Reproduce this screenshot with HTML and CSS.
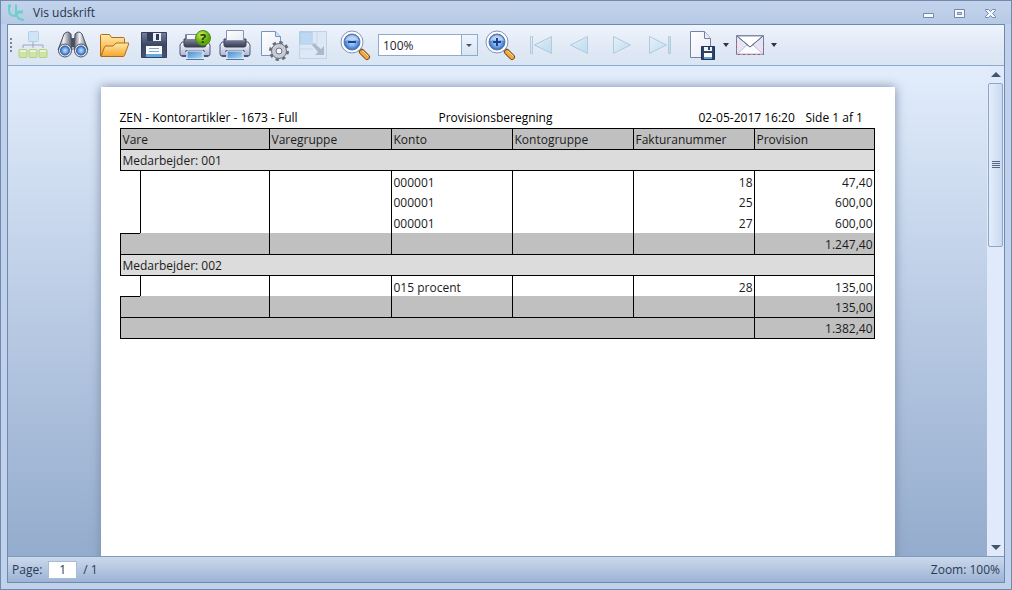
FILE: index.html
```html
<!DOCTYPE html>
<html lang="da">
<head>
<meta charset="utf-8">
<title>Vis udskrift</title>
<link rel="stylesheet" href="styles.css">
</head>
<body>
<svg class="defs" aria-hidden="true">
  <defs>
    <linearGradient id="steel" x1="0" y1="0" x2="1" y2="0"><stop offset="0" stop-color="#5b6070"/><stop offset=".4" stop-color="#f2f3f7"/><stop offset="1" stop-color="#4a5062"/></linearGradient>
    <radialGradient id="lens"><stop offset="0" stop-color="#c4e0ff"/><stop offset=".6" stop-color="#6ba5ec"/><stop offset="1" stop-color="#3566b4"/></radialGradient>
    <linearGradient id="gold" x1="0" y1="0" x2="0" y2="1"><stop offset="0" stop-color="#ffe9a6"/><stop offset="1" stop-color="#f5a52c"/></linearGradient>
    <linearGradient id="navy" x1="0" y1="0" x2="0" y2="1"><stop offset="0" stop-color="#75819a"/><stop offset=".5" stop-color="#3a4664"/><stop offset="1" stop-color="#465372"/></linearGradient>
    <linearGradient id="blue" x1="0" y1="0" x2="1" y2="1"><stop offset="0" stop-color="#4788c8"/><stop offset="1" stop-color="#b9ddf8"/></linearGradient>
    <linearGradient id="body" x1="0" y1="0" x2="0" y2="1"><stop offset="0" stop-color="#fdfdff"/><stop offset="1" stop-color="#aab3d2"/></linearGradient>
    <linearGradient id="slot" x1="0" y1="0" x2="0" y2="1"><stop offset="0" stop-color="#8289a0"/><stop offset="1" stop-color="#343a50"/></linearGradient>
    <linearGradient id="paper" x1="0" y1="0" x2="1" y2="1"><stop offset="0" stop-color="#ffffff"/><stop offset="1" stop-color="#e6eaf5"/></linearGradient>
    <linearGradient id="pale" x1="0" y1="0" x2="1" y2="1"><stop offset="0" stop-color="#e6f1fa"/><stop offset="1" stop-color="#bddaed"/></linearGradient>
    <radialGradient id="lime" cx=".4" cy=".3"><stop offset="0" stop-color="#c9f45c"/><stop offset="1" stop-color="#5fa80c"/></radialGradient>
    <symbol id="printer" viewBox="0 0 32 32">
      <path d="M3 13h26l2 3v9q0 2-2 2H3q-2 0-2-2v-9z" fill="url(#body)" stroke="#4d587e"/>
      <path d="M2 26h5v2H3zM25 26h5l-1 2h-4z" fill="#4d587e"/>
      <path d="M5 10h22v6q0 2-2 2H7q-2 0-2-2z" fill="url(#slot)" stroke="#3b4158"/>
      <path d="M7 21h18l1 2H6z" fill="#4c5878"/>
      <path d="M8 22h16v8H8z" fill="url(#blue)" stroke="#eef4fc"/>
      <path d="M7 30.500h18" stroke="#5278ab"/>
    </symbol>
    <symbol id="glass" viewBox="0 0 32 32">
      <path d="M20 20l3 3" stroke="#5b6480" stroke-width="4"/>
      <path d="M23 23l5 5" stroke="#7c4b1c" stroke-width="6" stroke-linecap="round"/>
      <path d="M23 23l5 5" stroke="#f3a83d" stroke-width="4" stroke-linecap="round"/>
      <path d="M24 22l5 5" stroke="#ffe2a0" stroke-linecap="round"/>
      <circle cx="13" cy="13" r="11" fill="#fff" stroke="#8293b4"/>
      <circle cx="13" cy="13" r="8" fill="url(#lens)" stroke="#5478b8"/>
      <path d="M6 12q1-6 7-6t7 6q-7-3-14 0z" fill="#fff" opacity=".5"/>
    </symbol>
  </defs>
</svg>
<div class="window">
  <header class="titlebar">
    <svg class="logo" width="18" height="18" viewBox="0 0 18 18" fill="none" stroke="#6fcfc8" stroke-width="2"><path d="M2 2v4q0 6 6 6h1M9 2v5q0 9 8 9"/><path d="M16 8h-3q-4 0-4 4M1 2h3M8 2h2" stroke-width="3"/></svg>
    <h1 class="title">Vis udskrift</h1>
    <div class="controls">
      <button class="control" aria-label="Minimer"><svg width="12" height="12" viewBox="0 0 12 12"><path d="M.5 6.500h10v4H.5z" fill="#f6faff" stroke="#7388ac"/></svg></button>
      <button class="control" aria-label="Maksimer"><svg width="12" height="12" viewBox="0 0 12 12"><path d="M.5 2.500h10v8H.5z" fill="#f6faff" stroke="#7388ac"/><path d="M3.500 5.500h4v2h-4z" fill="#c9d9ef" stroke="#7388ac"/></svg></button>
      <button class="control" aria-label="Luk"><svg width="12" height="12" viewBox="0 0 12 12"><path d="M.5 2.500h3l2 2 2-2h3v1l-3 3 3 3v1h-3l-2-2-2 2h-3v-1l3-3-3-3z" fill="#f6faff" stroke="#7388ac"/></svg></button>
    </div>
  </header>

  <main class="client">
    <div class="toolbar" role="toolbar" aria-label="Udskrift">
      <svg class="grip" width="5" height="16" viewBox="0 0 5 16" fill="#7b8496"><path d="M2 1h2v2H2zM2 5h2v2H2zM2 9h2v2H2zM2 13h2v2H2z"/></svg>
      <button class="tool" aria-label="Dokumentoversigt"><svg viewBox="0 0 32 32"><path d="M16 12v7M6 19v-3h20v3" fill="none" stroke="#a3a4c4"/><rect x="11.500" y="2.500" width="10" height="10" rx="1" fill="#cfe4f5" stroke="#b3cfe6"/><g fill="#cfe3a6" stroke="#b5d080"><rect x="2" y="20.500" width="8" height="8" rx="1"/><rect x="12" y="20.500" width="8" height="8" rx="1"/><rect x="22" y="20.500" width="8" height="8" rx="1"/></g><path d="M3 22h6M13 22h6M23 22h6" stroke="#eaf4d4" stroke-width="2"/></svg></button>
      <button class="tool" aria-label="Søg"><svg viewBox="0 0 32 32"><path d="M13 9h6v9h-6z" fill="#4a4f5e"/><path d="M7 5q4-4 7 0l1 16H1z" fill="url(#steel)" stroke="#4c5264"/><path d="M18 5q4-4 7 0l6 16H17z" fill="url(#steel)" stroke="#4c5264"/><g stroke="#4c5264" fill="#e3e7f0"><circle cx="8" cy="21.500" r="6.500"/><circle cx="24" cy="21.500" r="6.500"/></g><circle cx="8" cy="21.500" r="4.500" fill="url(#lens)" stroke="#355da0"/><circle cx="24" cy="21.500" r="4.500" fill="url(#lens)" stroke="#355da0"/></svg></button>
      <button class="tool" aria-label="Åbn"><svg viewBox="0 0 32 32"><path d="M3.500 27V6.500q0-1 1-1h8l2 3h12q1 0 1 1V15l-3 12z" fill="url(#gold)" stroke="#b06a1c"/><path d="M4 27.500h22q1 0 1.500-1L32 14H19l-3 3H9q-1 0-1.500 1z" fill="url(#gold)" stroke="#b06a1c"/></svg></button>
      <button class="tool" aria-label="Gem"><svg viewBox="0 0 32 32"><path d="M4.500 3.500h25v25h-25z" fill="url(#navy)" stroke="#353e5a"/><path d="M10 4h14v8H10z" fill="#e9edf5"/><path d="M10 4h6v8h-6z" fill="#303c58"/><path d="M19 5h3v6h-3z" fill="#2d3955"/><path d="M9 17h16v11H9z" fill="#fafcff"/><path d="M9 25h16v3H9z" fill="#62a9e6"/><path d="M12 19.500h10M12 22.500h10" stroke="#8ea6c4"/></svg></button>
      <button class="tool gap" aria-label="Udskriv"><svg viewBox="0 0 32 32"><path d="M6.500 5.500h15v9h-15z" fill="url(#paper)" stroke="#7884a8"/><use href="#printer" width="32" height="32"/><path d="M7.500 5.500h14v5h-14z" fill="url(#paper)" stroke="#7884a8"/><circle cx="24" cy="9" r="7.500" fill="url(#lime)" stroke="#4c8a0c"/><text x="24" y="14" class="mark">?</text></svg></button>
      <button class="tool" aria-label="Hurtig udskrivning"><svg viewBox="0 0 32 32"><use href="#printer" width="32" height="32"/><path d="M7.500 1.500h17v10h-17z" fill="url(#paper)" stroke="#8a93b2"/></svg></button>
      <button class="tool" aria-label="Sideopsætning"><svg viewBox="0 0 32 32"><path d="M2.500 2.500h14l5 5v19h-19z" fill="url(#paper)" stroke="#7a94c0"/><path d="M16.500 2.500v5h5" fill="#cfe4f7" stroke="#7a94c0"/><circle cx="20" cy="22" r="8.500" fill="none" stroke="#686d7b" stroke-width="3" stroke-dasharray="3.340 3.340"/><circle cx="20" cy="22" r="7.500" fill="#c9ccd5" stroke="#6d7280"/><circle cx="20" cy="22" r="3" fill="#f4f6fb" stroke="#6d7280"/></svg></button>
      <button class="tool" aria-label="Skaler" disabled><svg viewBox="0 0 32 32"><path d="M.5 2.500h27v27H.5z" fill="#dce8f5" stroke="#c2d1e4"/><path d="M1 3h12v12H1z" fill="#bdd8f2" stroke="#a9c8e8"/><path d="M13 3v13M18 3v12M1 15h17M1 20h13" fill="none" stroke="#c6d8ec"/><path d="M13 16l2-2 7 6 3-3v9h-9l3-3z" fill="#adb8ca"/></svg></button>
      <button class="tool" aria-label="Zoom ud"><svg viewBox="0 0 32 32"><use href="#glass" width="32" height="32"/><path d="M9 13h8" stroke="#203f86" stroke-width="2"/></svg></button>
      <div class="combo">
        <select class="combo-select" aria-label="Zoomniveau"><option>100%</option></select>
        <svg class="combo-arrow" width="16" height="20" viewBox="0 0 16 20"><path d="M.5 0v20" stroke="#93abcf"/><path d="M5 9h6l-3 3z" fill="#4a5468"/></svg>
      </div>
      <button class="tool gap" aria-label="Zoom ind"><svg viewBox="0 0 32 32"><use href="#glass" width="32" height="32"/><path d="M9 13h8M13 9v8" stroke="#203f86" stroke-width="2"/></svg></button>
      <button class="tool gap" aria-label="Første side" disabled><svg viewBox="0 0 32 32" fill="url(#pale)" stroke="#b0cade"><path d="M4.500 7.500h2v17h-2zM8.500 16L25.500 7.500v17z"/></svg></button>
      <button class="tool" aria-label="Forrige side" disabled><svg viewBox="0 0 32 32" fill="url(#pale)" stroke="#b0cade"><path d="M4.500 16L21.500 7.500v17z"/></svg></button>
      <button class="tool" aria-label="Næste side" disabled><svg viewBox="0 0 32 32" fill="url(#pale)" stroke="#b0cade"><path d="M24.500 16L7.500 7.500v17z"/></svg></button>
      <button class="tool" aria-label="Sidste side" disabled><svg viewBox="0 0 32 32" fill="url(#pale)" stroke="#b0cade"><path d="M22.500 7.500h2v17h-2zM20.500 16L3.500 7.500v17z"/></svg></button>
      <button class="tool" aria-label="Eksporter"><svg viewBox="0 0 32 32"><path d="M4.500 2.500h14l6 7v19h-20z" fill="url(#paper)" stroke="#76829f"/><path d="M18.500 2.500v7h6" fill="#e4ebf7" stroke="#76829f"/><path d="M15.500 17.500h13v13h-13z" fill="#2f456c" stroke="#223252"/><path d="M18 18h8v4h-8z" fill="#f0f4fb"/><path d="M22 18h2v3h-2z" fill="#2f456c"/><path d="M18 24h8v4h-8z" fill="#fff"/><path d="M18 28h8v2h-8z" fill="#5aa4e0"/></svg></button>
      <button class="drop" aria-label="Eksportformat"><svg width="6" height="4" viewBox="0 0 6 4"><path d="M0 0h6L3 4z" fill="#2c3446"/></svg></button>
      <button class="tool" aria-label="Send e-mail"><svg viewBox="0 0 32 32"><path d="M2.500 6.500h27v19h-27z" fill="#e6e5f4" stroke="#7880a8"/><path d="M3 25l10-9h6l10 9z" fill="#fafaff" stroke="#b9bfdb"/><path d="M2.500 12v13.500h27V12" fill="none" stroke="#c0505e" stroke-dasharray="2 3"/><path d="M3 7h26L16 18z" fill="#fff" stroke="#8991b0"/><path d="M3 7l13 11L29 7" fill="none" stroke="#626a80"/></svg></button>
      <button class="drop" aria-label="E-mailformat"><svg width="6" height="4" viewBox="0 0 6 4"><path d="M0 0h6L3 4z" fill="#2c3446"/></svg></button>
    </div>

    <div class="viewer">
      <div class="canvas">
        <article class="sheet">
          <div class="sheet-head">
            <span>ZEN - Kontorartikler - 1673 - Full</span>
            <span>Provisionsberegning</span>
            <span>02-05-2017 16:20</span>
            <span>Side 1 af 1</span>
          </div>
          <table class="report">
            <colgroup><col class="col-indent"><col class="col-item"><col class="col-group"><col class="col-std"><col class="col-std"><col class="col-std"><col class="col-std"></colgroup>
            <thead>
              <tr class="heading"><th colspan="2">Vare</th><th>Varegruppe</th><th>Konto</th><th>Kontogruppe</th><th>Fakturanummer</th><th>Provision</th></tr>
            </thead>
            <tbody>
              <tr class="group"><th colspan="7">Medarbejder: 001</th></tr>
              <tr class="data first"><td class="indent"></td><td></td><td></td><td>000001</td><td></td><td class="num">18</td><td class="num">47,40</td></tr>
              <tr class="data"><td class="indent"></td><td></td><td></td><td>000001</td><td></td><td class="num">25</td><td class="num">600,00</td></tr>
              <tr class="data"><td class="indent"></td><td></td><td></td><td>000001</td><td></td><td class="num">27</td><td class="num">600,00</td></tr>
              <tr class="sum"><td class="step"></td><td class="joined"></td><td></td><td></td><td></td><td></td><td class="num">1.247,40</td></tr>
            </tbody>
            <tbody>
              <tr class="group"><th colspan="7">Medarbejder: 002</th></tr>
              <tr class="data first"><td class="indent"></td><td></td><td></td><td>015 procent</td><td></td><td class="num">28</td><td class="num">135,00</td></tr>
              <tr class="sum"><td class="step"></td><td class="joined"></td><td></td><td></td><td></td><td></td><td class="num">135,00</td></tr>
            </tbody>
            <tfoot>
              <tr class="total"><td colspan="6"></td><td class="num">1.382,40</td></tr>
            </tfoot>
          </table>
        </article>
      </div>
      <div class="scrollbar">
        <button class="scroll-button" aria-label="Rul op"><svg width="10" height="6" viewBox="0 0 10 6"><path d="M5 0l5 5H0z" fill="#45536c"/></svg></button>
        <div class="track"><div class="thumb"><svg width="8" height="8" viewBox="0 0 8 8"><path d="M0 .5h8M0 2.500h8M0 4.500h8M0 6.500h8" stroke="#56657f"/></svg></div></div>
        <button class="scroll-button" aria-label="Rul ned"><svg width="10" height="6" viewBox="0 0 10 6"><path d="M0 0h10L5 5z" fill="#45536c"/></svg></button>
      </div>
    </div>

    <footer class="status">
      <label for="page">Page:</label>
      <input class="page-input" id="page" type="text" value="1">
      <span>/ 1</span>
      <span class="zoom">Zoom: 100%</span>
    </footer>
  </main>
</div>
</body>
</html>
```
FILE: styles.css
```css
* { box-sizing: border-box; }
body { margin: 0; font: 12px/16px "Open Sans", "Noto Sans", sans-serif; color: #1e1e1e; }
button { padding: 0; border: 0; background: none; font: inherit; }
svg { display: block; }
.defs { position: absolute; width: 0; height: 0; }

.window { height: 100vh; display: flex; flex-direction: column; padding: 0 6px 6px; border: 1px solid #7289ae; background: #bfd1eb; }
.titlebar { flex: none; height: 23px; margin: 0 -6px; padding: 0 8px 0 6px; display: flex; align-items: center; background: linear-gradient(#c3d3ec, #b7cae5); }
.logo { flex: none; }
.title { margin: 0 0 0 8px; font-size: 12px; font-weight: 400; color: #26354e; }
.controls { margin-left: auto; display: flex; gap: 11px; padding-right: 2px; }
.control { width: 20px; height: 20px; display: grid; place-items: center; }

.client { flex: 1; min-height: 0; display: flex; flex-direction: column; border: 1px solid #7289ae; }
.toolbar { flex: none; height: 41px; display: flex; align-items: center; border-bottom: 1px solid #8fa9cf; background: linear-gradient(#eff4fc, #e2eaf6 50%, #d9e5f3); }
.grip { flex: none; }
.tool { flex: none; width: 40px; height: 40px; display: grid; place-items: center; }
.tool svg { width: 32px; height: 32px; }
.gap { margin-left: 2px; }
.mark { font: 700 13px "Open Sans", sans-serif; text-anchor: middle; fill: #24400a; }
.combo { flex: none; width: 100px; height: 22px; margin-left: 3px; display: grid; align-items: center; border: 1px solid #8fa9cf; background: #fff; }
.combo-select, .combo-arrow { grid-area: 1 / 1; }
.combo-select { width: 100%; height: 20px; padding: 2px 20px 0 4px; border: 0; background: none; font: inherit; color: #1e2430; appearance: none; }
.combo-arrow { justify-self: end; background: linear-gradient(#eef4fc, #d9e5f4); pointer-events: none; }
.drop { flex: none; width: 8px; height: 32px; display: grid; place-items: center; }

.viewer { flex: 1; min-height: 0; display: flex; background: linear-gradient(#e2edfc, #bacbe4 50%, #94accd); }
.canvas { flex: 1; min-width: 0; overflow: hidden; padding-top: 21px; }
.sheet { width: 794px; max-width: 100%; min-height: 1123px; margin: 0 auto; padding: 23px 20px 20px 19px; background: #fff; box-shadow: 0 0 10px #7b8ba5; color: #000; }
.sheet-head { display: grid; grid-template-columns: 319fr 260fr 107fr 69fr; height: 18px; white-space: nowrap; }
.report { width: 100%; table-layout: fixed; border-spacing: 0; border-bottom: 1px solid #000; color: #1b1b1b; }
.col-indent { width: 20px; }
.col-item { width: 129px; }
.col-group { width: 122px; }
.col-std { width: 121px; }
.report th, .report td { height: 21px; padding: 2px 2px 0; border-left: 1px solid #000; font-weight: 400; text-align: left; line-height: 16px; }
.report tr > :last-child { border-right: 1px solid #000; }
.report .heading th, .report .group th, .report .total td, .report .first td, .report .step { border-top: 1px solid #000; }
.report .heading th, .report .sum td, .report .total td { background: #c0c0c0; }
.report .group th { background: #dcdcdc; }
.report .data td { padding-top: 3px; }
.report .indent, .report .joined { border-left: 0; }
.report .num { padding-right: 1px; text-align: right; }

.scrollbar { flex: none; width: 17px; display: flex; flex-direction: column; background: #e1eafa; }
.scroll-button { height: 17px; display: grid; place-items: center; }
.track { flex: 1; }
.thumb { height: 36%; margin: 0 1px; display: grid; place-items: center; border: 1px solid #8fa6c8; border-radius: 2px; background: linear-gradient(90deg, #e4eefb, #c9daf0); }

.status { flex: none; height: 26px; padding: 0 4px; display: flex; align-items: center; gap: 6px; border-top: 1px solid #7f99c0; background: linear-gradient(#cbd9ec, #b4c6e0 50%, #9cb3d5); color: #2a3a56; }
.page-input { width: 29px; height: 18px; padding: 0; border: 1px solid #a9bbd6; background: #fff; font: inherit; color: inherit; text-align: center; }
.zoom { margin-left: auto; }
```
